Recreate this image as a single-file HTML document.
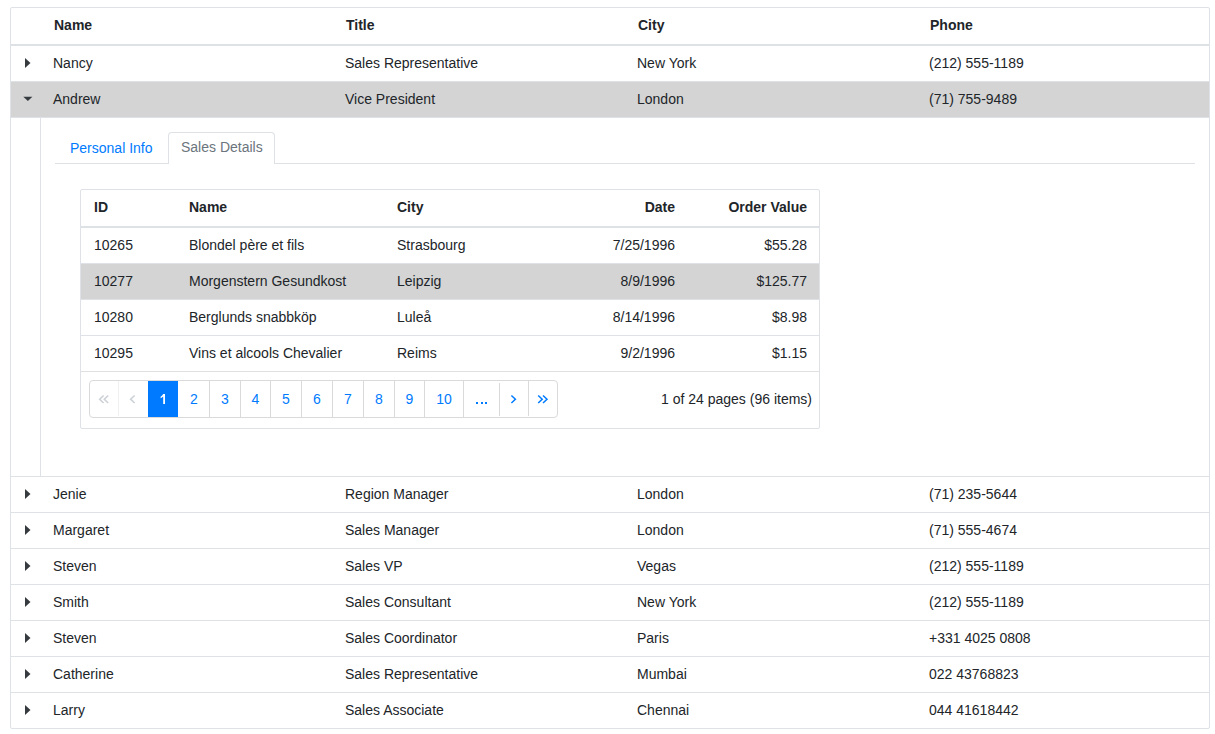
<!DOCTYPE html>
<html><head><meta charset="utf-8"><style>
html,body{margin:0;padding:0;background:#fff;}
body{width:1215px;height:734px;position:relative;overflow:hidden;font-family:"Liberation Sans",sans-serif;}
body>div,body>svg{position:absolute;box-sizing:content-box;}
.t{font-size:14px;line-height:20px;white-space:nowrap;color:#212529;}
.b{font-weight:bold;}
</style></head><body>
<div style="left:10px;top:7px;width:1198px;height:720px;border:1px solid #dee2e6;border-radius:2px"></div>
<div style="left:11px;top:44px;width:1198px;height:2px;background:#dee2e6"></div>
<div style="left:11px;top:82px;width:1198px;height:35px;background:#d4d4d4"></div>
<div style="left:11px;top:81px;width:1198px;height:1px;background:#dee2e6"></div>
<div style="left:11px;top:117px;width:1198px;height:1px;background:#dee2e6"></div>
<div style="left:11px;top:476px;width:1198px;height:1px;background:#dee2e6"></div>
<div style="left:11px;top:512px;width:1198px;height:1px;background:#dee2e6"></div>
<div style="left:11px;top:548px;width:1198px;height:1px;background:#dee2e6"></div>
<div style="left:11px;top:584px;width:1198px;height:1px;background:#dee2e6"></div>
<div style="left:11px;top:620px;width:1198px;height:1px;background:#dee2e6"></div>
<div style="left:11px;top:656px;width:1198px;height:1px;background:#dee2e6"></div>
<div style="left:11px;top:692px;width:1198px;height:1px;background:#dee2e6"></div>
<div style="left:40px;top:118px;width:1px;height:358px;background:#dee2e6"></div>
<div class="t b" style="left:54px;top:15px;">Name</div>
<div class="t b" style="left:346px;top:15px;">Title</div>
<div class="t b" style="left:638px;top:15px;">City</div>
<div class="t b" style="left:930px;top:15px;">Phone</div>
<div class="t" style="left:53px;top:53px;">Nancy</div>
<div class="t" style="left:345px;top:53px;">Sales Representative</div>
<div class="t" style="left:637px;top:53px;">New York</div>
<div class="t" style="left:929px;top:53px;">(212) 555-1189</div>
<svg style="left:22px;top:55px" width="12" height="14" viewBox="22 55 12 14"><polygon points="25,58 25,68 30.5,63" fill="#363b40"/></svg>
<div class="t" style="left:53px;top:89px;">Andrew</div>
<div class="t" style="left:345px;top:89px;">Vice President</div>
<div class="t" style="left:637px;top:89px;">London</div>
<div class="t" style="left:929px;top:89px;">(71) 755-9489</div>
<svg style="left:22px;top:91px" width="12" height="12" viewBox="22 91 12 12"><polygon points="23.3,96.8 32.4,96.8 27.9,101.1" fill="#363b40"/></svg>
<div class="t" style="left:53px;top:484px;">Jenie</div>
<div class="t" style="left:345px;top:484px;">Region Manager</div>
<div class="t" style="left:637px;top:484px;">London</div>
<div class="t" style="left:929px;top:484px;">(71) 235-5644</div>
<svg style="left:22px;top:486px" width="12" height="14" viewBox="22 486 12 14"><polygon points="25,489 25,499 30.5,494" fill="#363b40"/></svg>
<div class="t" style="left:53px;top:520px;">Margaret</div>
<div class="t" style="left:345px;top:520px;">Sales Manager</div>
<div class="t" style="left:637px;top:520px;">London</div>
<div class="t" style="left:929px;top:520px;">(71) 555-4674</div>
<svg style="left:22px;top:522px" width="12" height="14" viewBox="22 522 12 14"><polygon points="25,525 25,535 30.5,530" fill="#363b40"/></svg>
<div class="t" style="left:53px;top:556px;">Steven</div>
<div class="t" style="left:345px;top:556px;">Sales VP</div>
<div class="t" style="left:637px;top:556px;">Vegas</div>
<div class="t" style="left:929px;top:556px;">(212) 555-1189</div>
<svg style="left:22px;top:558px" width="12" height="14" viewBox="22 558 12 14"><polygon points="25,561 25,571 30.5,566" fill="#363b40"/></svg>
<div class="t" style="left:53px;top:592px;">Smith</div>
<div class="t" style="left:345px;top:592px;">Sales Consultant</div>
<div class="t" style="left:637px;top:592px;">New York</div>
<div class="t" style="left:929px;top:592px;">(212) 555-1189</div>
<svg style="left:22px;top:594px" width="12" height="14" viewBox="22 594 12 14"><polygon points="25,597 25,607 30.5,602" fill="#363b40"/></svg>
<div class="t" style="left:53px;top:628px;">Steven</div>
<div class="t" style="left:345px;top:628px;">Sales Coordinator</div>
<div class="t" style="left:637px;top:628px;">Paris</div>
<div class="t" style="left:929px;top:628px;">+331 4025 0808</div>
<svg style="left:22px;top:630px" width="12" height="14" viewBox="22 630 12 14"><polygon points="25,633 25,643 30.5,638" fill="#363b40"/></svg>
<div class="t" style="left:53px;top:664px;">Catherine</div>
<div class="t" style="left:345px;top:664px;">Sales Representative</div>
<div class="t" style="left:637px;top:664px;">Mumbai</div>
<div class="t" style="left:929px;top:664px;">022 43768823</div>
<svg style="left:22px;top:666px" width="12" height="14" viewBox="22 666 12 14"><polygon points="25,669 25,679 30.5,674" fill="#363b40"/></svg>
<div class="t" style="left:53px;top:700px;">Larry</div>
<div class="t" style="left:345px;top:700px;">Sales Associate</div>
<div class="t" style="left:637px;top:700px;">Chennai</div>
<div class="t" style="left:929px;top:700px;">044 41618442</div>
<svg style="left:22px;top:702px" width="12" height="14" viewBox="22 702 12 14"><polygon points="25,705 25,715 30.5,710" fill="#363b40"/></svg>
<div style="left:55px;top:163px;width:114px;height:1px;background:#dee2e6"></div>
<div style="left:274px;top:163px;width:921px;height:1px;background:#dee2e6"></div>
<div style="left:168px;top:132px;width:105px;height:31px;border:1px solid #dee2e6;border-bottom:0;border-radius:4px 4px 0 0;background:#fff"></div>
<div class="t" style="left:70px;top:138px;color:#007bff">Personal Info</div>
<div class="t" style="left:181px;top:137px;color:#6c757d">Sales Details</div>
<div style="left:80px;top:189px;width:738px;height:238px;border:1px solid #dee2e6;border-radius:2px"></div>
<div style="left:81px;top:226px;width:738px;height:2px;background:#dee2e6"></div>
<div style="left:81px;top:264px;width:738px;height:35px;background:#d4d4d4"></div>
<div style="left:81px;top:263px;width:738px;height:1px;background:#dee2e6"></div>
<div style="left:81px;top:299px;width:738px;height:1px;background:#dee2e6"></div>
<div style="left:81px;top:335px;width:738px;height:1px;background:#dee2e6"></div>
<div style="left:81px;top:371px;width:738px;height:1px;background:#e0e0e0"></div>
<div class="t b" style="left:94px;top:197px;">ID</div>
<div class="t b" style="left:189px;top:197px;">Name</div>
<div class="t b" style="left:397px;top:197px;">City</div>
<div class="t b" style="right:540px;top:197px;text-align:right;">Date</div>
<div class="t b" style="right:408px;top:197px;text-align:right;">Order Value</div>
<div class="t" style="left:94px;top:235px;">10265</div>
<div class="t" style="left:189px;top:235px;">Blondel p&egrave;re et fils</div>
<div class="t" style="left:397px;top:235px;">Strasbourg</div>
<div class="t" style="right:540px;top:235px;text-align:right;">7/25/1996</div>
<div class="t" style="right:408px;top:235px;text-align:right;">$55.28</div>
<div class="t" style="left:94px;top:271px;">10277</div>
<div class="t" style="left:189px;top:271px;">Morgenstern Gesundkost</div>
<div class="t" style="left:397px;top:271px;">Leipzig</div>
<div class="t" style="right:540px;top:271px;text-align:right;">8/9/1996</div>
<div class="t" style="right:408px;top:271px;text-align:right;">$125.77</div>
<div class="t" style="left:94px;top:307px;">10280</div>
<div class="t" style="left:189px;top:307px;">Berglunds snabbk&ouml;p</div>
<div class="t" style="left:397px;top:307px;">Lule&aring;</div>
<div class="t" style="right:540px;top:307px;text-align:right;">8/14/1996</div>
<div class="t" style="right:408px;top:307px;text-align:right;">$8.98</div>
<div class="t" style="left:94px;top:343px;">10295</div>
<div class="t" style="left:189px;top:343px;">Vins et alcools Chevalier</div>
<div class="t" style="left:397px;top:343px;">Reims</div>
<div class="t" style="right:540px;top:343px;text-align:right;">9/2/1996</div>
<div class="t" style="right:408px;top:343px;text-align:right;">$1.15</div>
<div style="left:89px;top:380px;width:467px;height:36px;border:1px solid #dadada;border-radius:4px"></div>
<div style="left:148px;top:381px;width:30px;height:36px;background:#007bff"></div>
<div style="left:118px;top:381px;width:1px;height:35px;background:#f0f0f0"></div>
<div style="left:209px;top:381px;width:1px;height:36px;background:#dadada"></div>
<div style="left:240px;top:381px;width:1px;height:36px;background:#dadada"></div>
<div style="left:270px;top:381px;width:1px;height:36px;background:#dadada"></div>
<div style="left:301px;top:381px;width:1px;height:36px;background:#dadada"></div>
<div style="left:332px;top:381px;width:1px;height:36px;background:#dadada"></div>
<div style="left:363px;top:381px;width:1px;height:36px;background:#dadada"></div>
<div style="left:394px;top:381px;width:1px;height:36px;background:#dadada"></div>
<div style="left:424px;top:381px;width:1px;height:36px;background:#dadada"></div>
<div style="left:463px;top:381px;width:1px;height:36px;background:#dadada"></div>
<div style="left:499px;top:383px;width:1px;height:33px;background:#dadada"></div>
<div style="left:528px;top:381px;width:1px;height:35px;background:#dadada"></div>
<div class="t" style="left:178px;top:389px;width:32px;text-align:center;color:#007bff">2</div>
<div class="t" style="left:209px;top:389px;width:32px;text-align:center;color:#007bff">3</div>
<div class="t" style="left:240px;top:389px;width:31px;text-align:center;color:#007bff">4</div>
<div class="t" style="left:270px;top:389px;width:32px;text-align:center;color:#007bff">5</div>
<div class="t" style="left:301px;top:389px;width:32px;text-align:center;color:#007bff">6</div>
<div class="t" style="left:332px;top:389px;width:32px;text-align:center;color:#007bff">7</div>
<div class="t" style="left:363px;top:389px;width:32px;text-align:center;color:#007bff">8</div>
<div class="t" style="left:394px;top:389px;width:31px;text-align:center;color:#007bff">9</div>
<div class="t" style="left:424px;top:389px;width:40px;text-align:center;color:#007bff">10</div>
<div style="left:476px;top:401.9px;width:2.4px;height:2.3px;background:#007bff"></div>
<div style="left:480.5px;top:401.9px;width:2.4px;height:2.3px;background:#007bff"></div>
<div style="left:485px;top:401.9px;width:2.4px;height:2.3px;background:#007bff"></div>
<svg style="left:0;top:0" width="1215" height="734">
<polyline points="103.6,395.5 99.7,399.2 103.6,403" fill="none" stroke="#cdd2d7" stroke-width="1.6"/>
<polyline points="108.2,395.5 104.3,399.2 108.2,403" fill="none" stroke="#cdd2d7" stroke-width="1.6"/>
<polyline points="134.6,395.5 130.6,399.2 134.6,403" fill="none" stroke="#cdd2d7" stroke-width="1.6"/>
<path d="M163.2,394 L165,394 L165,403.9 L163.2,403.9 L163.2,396.6 Q162,397.6 160.6,398.2 L160.6,396.7 Q162.4,395.7 163.2,394 Z" fill="#fff"/>
<polyline points="511.4,395.5 515.4,399.2 511.4,403" fill="none" stroke="#007bff" stroke-width="1.5"/>
<polyline points="538.2,395.5 542.2,399.2 538.2,403" fill="none" stroke="#007bff" stroke-width="1.5"/>
<polyline points="543,395.5 547,399.2 543,403" fill="none" stroke="#007bff" stroke-width="1.5"/>
</svg>
<div class="t" style="right:403px;top:389px;text-align:right;">1 of 24 pages (96 items)</div>
</body></html>
